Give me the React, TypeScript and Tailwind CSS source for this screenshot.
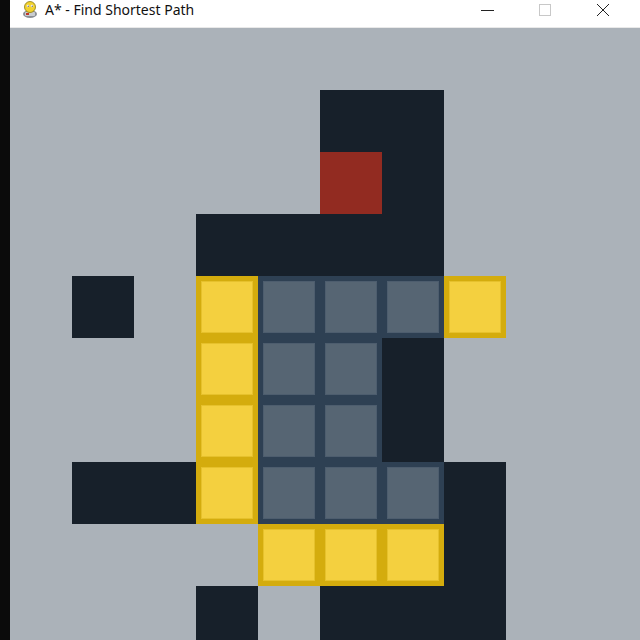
import React from 'react';

// A* grid, one string per row, one char per cell:
// . empty  W wall  S start  P path  C closed
const grid = [
  '...........',
  '.....WW....',
  '.....SW....',
  '...WWWW....',
  '.W.PCCCP...',
  '...PCCW....',
  '...PCCW....',
  '.WWPCCCW...',
  '....PPPW...',
  '...W.WWW...',
];

function Cell({ kind }: { kind: string }) {
  if (kind === 'W') return <div className="w-[62px] h-[62px] bg-[#17202a]" />;
  if (kind === 'S') return <div className="w-[62px] h-[62px] bg-[#922b21]" />;
  if (kind === 'P')
    return (
      <div className="w-[62px] h-[62px] bg-[#d4ac0d] p-[5px]">
        <div className="w-full h-full bg-[#f4d03f] border border-[#e6c12c]" />
      </div>
    );
  if (kind === 'C')
    return (
      <div className="w-[62px] h-[62px] bg-[#2e4053] p-[5px]">
        <div className="w-full h-full bg-[#566573] border border-[#4d5d6e]" />
      </div>
    );
  return <div className="w-[62px] h-[62px] bg-[#abb2b9]" />;
}

function PygameIcon() {
  return (
    <svg width="18" height="18" viewBox="0 0 18 18">
      <ellipse cx="9" cy="13" rx="7" ry="4" fill="#8a8f96" />
      <rect x="4" y="11" width="10" height="4" rx="1" fill="#c9ccd0" />
      <circle cx="9" cy="6" r="5.5" fill="#f2d22e" stroke="#8a7a12" strokeWidth="0.8" />
      <circle cx="7" cy="5" r="1.3" fill="#fff" />
      <circle cx="11" cy="5" r="1.3" fill="#fff" />
      <circle cx="7.2" cy="5.2" r="0.6" fill="#222" />
      <circle cx="11.2" cy="5.2" r="0.6" fill="#222" />
      <rect x="5" y="12" width="3" height="2" fill="#c0392b" />
    </svg>
  );
}

export default function App() {
  return (
    <div className="w-[640px] h-[640px] flex bg-black overflow-hidden">
      <div className="w-[10px] shrink-0 bg-[#0b0b0b]" />
      <div className="flex-1 flex flex-col bg-white overflow-hidden">
        <div className="h-[28px] shrink-0 flex items-start bg-white border-b border-[#e9e9e9]">
          <div className="pl-[11px] pt-[1px]">
            <PygameIcon />
          </div>
          <span className="ml-[6px] text-[14px] leading-[20px] text-[#111] font-['Noto_Sans',sans-serif]">
            A* - Find Shortest Path
          </span>
          <div className="ml-auto mr-[8px] flex items-start">
            <div className="w-[58px] h-[20px] flex items-center justify-center">
              <div className="w-[13px] h-px bg-[#222]" />
            </div>
            <div className="w-[58px] h-[20px] flex items-center justify-center">
              <div className="w-[12px] h-[12px] border border-[#c8c8c8]" />
            </div>
            <div className="w-[58px] h-[20px] flex items-center justify-center">
              <svg width="14" height="14" viewBox="0 0 14 14">
                <path d="M1 1L13 13M13 1L1 13" stroke="#222" strokeWidth="1" />
              </svg>
            </div>
          </div>
        </div>
        <div className="flex-1 overflow-hidden bg-[#abb2b9]">
          <div className="grid grid-cols-[repeat(11,62px)]">
            {grid.map((row, r) =>
              row.split('').map((kind, c) => <Cell key={`${r}-${c}`} kind={kind} />)
            )}
          </div>
        </div>
      </div>
    </div>
  );
}
